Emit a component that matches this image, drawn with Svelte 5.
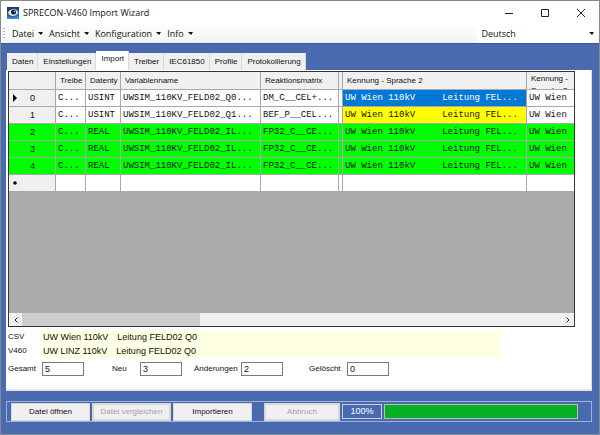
<script lang="ts">
  const menus = ["Datei", "Ansicht", "Konfiguration", "Info"];
  const tabs = ["Daten", "Einstellungen", "Import", "Treiber", "IEC61850", "Profile", "Protokollierung"];
  const kennung = "UW Wien 110kV     Leitung FEL...";

  const rows = [
    { type: "USINT", name: "UWSIM_110KV_FELD02_Q0...", matrix: "DM_C__CEL+...", state: "selected" },
    { type: "USINT", name: "UWSIM_110KV_FELD02_Q1...", matrix: "BEF_P__CEL...", state: "changed" },
    { type: "REAL", name: "UWSIM_110KV_FELD02_IL...", matrix: "FP32_C__CE...", state: "added" },
    { type: "REAL", name: "UWSIM_110KV_FELD02_IL...", matrix: "FP32_C__CE...", state: "added" },
    { type: "REAL", name: "UWSIM_110KV_FELD02_IL...", matrix: "FP32_C__CE...", state: "added" },
  ];

  const compare = [
    { source: "CSV", station: "UW Wien 110kV", line: "Leitung FELD02 Q0" },
    { source: "V460", station: "UW LINZ 110kV", line: "Leitung FELD02 Q0" },
  ];

  const counts = [
    { id: "total", label: "Gesamt", value: "5" },
    { id: "new", label: "Neu", value: "3" },
    { id: "changes", label: "Änderungen", value: "2" },
    { id: "deleted", label: "Gelöscht", value: "0" },
  ];

  let activeTab = $state("Import");
  let language = $state("Deutsch");
  let progress = $state(100);
</script>

<div class="window">
  <header class="titlebar">
    <svg class="logo" viewBox="0 0 12 12" aria-hidden="true">
      <rect width="12" height="12" fill="#2a5fa8" />
      <path d="M0 0h12v3L6 2 0 5z" fill="#1b3d78" />
      <path d="M1 6c1-3 3-4 5.500-4S11 4 11 6c-1 2-3 3-5 3S2 8 1 6z" fill="#dfe7ee" />
      <circle cx="6.500" cy="5" r="2.500" fill="#10182a" />
      <circle cx="7.500" cy="4.500" r=".8" fill="#c9d6e2" />
      <path d="M0 9c3 2 8 2 12-1v4H0z" fill="#3f86cf" />
    </svg>
    <h1>SPRECON-V460 Import Wizard</h1>
    <div class="window-buttons">
      <button aria-label="Minimieren"><svg viewBox="0 0 10 10"><path d="M1 5.500h8" /></svg></button>
      <button aria-label="Maximieren"><svg viewBox="0 0 10 10"><path d="M1.500 1.500h7v7h-7z" /></svg></button>
      <button aria-label="Schließen"><svg viewBox="0 0 10 10"><path d="M1 1l8 8M9 1l-8 8" /></svg></button>
    </div>
  </header>

  <nav class="menubar">
    <span class="grip"></span>
    {#each menus as menu (menu)}
      <button class="menu">{menu}<span class="caret"></span></button>
    {/each}
    <div class="language">
      <select aria-label="Sprache" bind:value={language}>
        <option>Deutsch</option>
        <option>English</option>
      </select>
      <span class="caret"></span>
    </div>
  </nav>

  <main>
    <div class="tabs" role="tablist">
      {#each tabs as tab (tab)}
        <button
          class="tab"
          class:active={tab === activeTab}
          role="tab"
          aria-selected={tab === activeTab}
          onclick={() => (activeTab = tab)}
        >{tab}</button>
      {/each}
    </div>

    <section class="page">
      <div class="grid">
        <div class="grid-view">
          <table>
            <colgroup>
              <col class="c-head" /><col class="c-driver" /><col class="c-type" /><col class="c-name" />
              <col class="c-matrix" /><col class="c-thin" /><col class="c-lang" /><col />
            </colgroup>
            <thead>
              <tr>
                <th></th>
                <th>Treibe</th>
                <th>Datenty</th>
                <th>Variablenname</th>
                <th>Reaktionsmatrix</th>
                <th></th>
                <th>Kennung - Sprache 2</th>
                <th class="wrap"><div>Kennung - Sprache 3</div></th>
              </tr>
            </thead>
            <tbody>
              {#each rows as row, i}
                <tr class={row.state}>
                  <th scope="row"><div class="row-head">
                    <svg viewBox="0 0 4 8">{#if i === 0}<path d="M0 0l4 4-4 4z" />{/if}</svg>
                    <span>{i}</span>
                  </div></th>
                  <td>C...</td>
                  <td>{row.type}</td>
                  <td>{row.name}</td>
                  <td>{row.matrix}</td>
                  <td></td>
                  <td class="kennung">{kennung}</td>
                  <td>UW Wien</td>
                </tr>
              {/each}
              <tr>
                <th scope="row"><div class="row-head">
                  <svg viewBox="0 0 4 8"><circle cx="2" cy="4" r="1.800" /></svg>
                </div></th>
                <td></td><td></td><td></td><td></td><td></td><td></td><td></td>
              </tr>
            </tbody>
          </table>
        </div>
        <div class="scrollbar">
          <button aria-label="Nach links"><svg viewBox="0 0 6 6"><path d="M4.500 .5L2 3l2.500 2.500" /></svg></button>
          <div class="track"><div class="thumb"></div></div>
          <button aria-label="Nach rechts"><svg viewBox="0 0 6 6"><path d="M1.500 .5L4 3L1.500 5.500" /></svg></button>
        </div>
      </div>

      <dl class="compare">
        {#each compare as item (item.source)}
          <div>
            <dt>{item.source}</dt>
            <dd><span>{item.station}</span><span>{item.line}</span></dd>
          </div>
        {/each}
      </dl>

      <div class="counts">
        {#each counts as count (count.id)}
          <label for={count.id} class={count.id}>{count.label}</label>
          <input id={count.id} value={count.value} />
        {/each}
      </div>
    </section>

    <footer>
      <button>Datei öffnen</button>
      <button disabled>Datei vergleichen</button>
      <button>Importieren</button>
      <button class="cancel" disabled>Abbruch</button>
      <output>{progress}%</output>
      <div class="progress" role="progressbar" aria-label="Fortschritt" aria-valuenow={progress}>
        <div style="width: {progress}%"></div>
      </div>
    </footer>
  </main>
</div>

<style>
  :global(body) {
    margin: 0;
  }
  .window {
    --ui: "Open Sans", "Noto Sans", sans-serif;
    --form: "Liberation Sans", Arial, sans-serif;
    --blue: #496aae;
    --blue-dark: #3259a5;
    display: flex;
    flex-direction: column;
    box-sizing: border-box;
    min-height: 100vh;
    border: 1px solid #85888f;
    background: var(--blue);
    color: #111;
    font: 8px/12px var(--form);
  }
  button, input, select {
    margin: 0;
    padding: 0;
    border: none;
    border-radius: 0;
    background: none;
    color: inherit;
    font: inherit;
  }
  .titlebar {
    display: flex;
    align-items: center;
    height: 23px;
    padding-left: 6px;
    background: #fff;
    font-family: var(--ui);
  }
  .logo {
    width: 12px;
    height: 12px;
    margin-right: 4px;
  }
  h1 {
    flex: 1;
    margin: 0;
    font-size: 9px;
    font-weight: 400;
  }
  .window-buttons {
    display: flex;
  }
  .window-buttons button {
    display: grid;
    place-items: center;
    width: 36px;
    height: 22px;
  }
  .window-buttons svg {
    width: 10px;
    height: 10px;
    fill: none;
    stroke: #222;
  }
  .menubar {
    display: flex;
    align-items: center;
    height: 19px;
    padding: 0 3px 0 2px;
    background: linear-gradient(#fff, #f2f3f4);
    font-family: var(--ui);
    font-size: 9px;
  }
  .grip {
    width: 2px;
    height: 12px;
    margin-right: 7px;
    background: repeating-linear-gradient(#b5b5b5 0 1px, transparent 1px 3px);
  }
  .menu {
    display: flex;
    align-items: center;
    gap: 4px;
    margin-right: 6px;
  }
  .caret {
    border: 3px solid transparent;
    border-width: 3px 2px 0 3px;
    border-top-color: #111;
  }
  .language {
    display: flex;
    align-items: center;
    width: 20%;
    height: 18px;
    margin-left: auto;
    background: #fff;
  }
  .language select {
    flex: 1;
    padding-left: 4px;
    appearance: none;
  }
  .language .caret {
    margin-right: 2px;
  }
  main {
    display: flex;
    flex: 1;
    flex-direction: column;
    padding: 7px 7px 12px 5px;
    border-top: 1px solid var(--blue-dark);
  }
  .tabs {
    display: flex;
    align-items: flex-end;
    padding-left: 1px;
  }
  .tab {
    height: 17px;
    padding: 0 4px 0 5px;
    border-right: 1px solid #d9d9d9;
    background: #f0f0f0;
  }
  .tab.active {
    height: 19px;
    padding-bottom: 3px;
    background: #fff;
  }
  .page {
    display: flex;
    flex: 1;
    flex-direction: column;
    padding: 1px 16px 13px 2px;
    border-right: 1px solid #dcdcdc;
    border-bottom: 2px solid #e4e4e4;
    background: #fff;
  }
  .grid {
    display: flex;
    flex: 1;
    flex-direction: column;
    border: 1px solid #333;
    background: #ababab;
  }
  .grid-view {
    flex: 1;
    overflow: hidden;
  }
  table {
    width: 100%;
    table-layout: fixed;
    border-spacing: 0;
  }
  .c-head { width: 47px; }
  .c-driver { width: 30px; }
  .c-type { width: 35px; }
  .c-name { width: 140px; }
  .c-matrix { width: 78px; }
  .c-thin { width: 4px; }
  .c-lang { width: 184px; }
  th, td {
    box-sizing: border-box;
    height: 17px;
    padding: 0 0 0 2px;
    border-right: 1px solid #a8a8a8;
    border-bottom: 1px solid #a8a8a8;
    background: #fff;
    font-weight: 400;
    line-height: 12px;
    text-align: left;
    white-space: pre;
    overflow: hidden;
  }
  td {
    font-family: "Liberation Mono", "Courier New", monospace;
    font-size: 9px;
  }
  th {
    background: #f0f0f0;
  }
  thead th {
    height: 18px;
    padding-left: 4px;
  }
  th:last-child, td:last-child {
    border-right: none;
  }
  .wrap div {
    height: 16px;
    white-space: normal;
    overflow: hidden;
  }
  .row-head {
    display: flex;
    align-items: center;
    gap: 13px;
    padding-left: 2px;
    font-size: 9px;
  }
  .row-head svg {
    width: 4px;
    height: 8px;
  }
  .added th, .added td {
    background: #0f0;
  }
  .selected .kennung {
    background: #0078d7;
    color: #fff;
  }
  .changed .kennung {
    background: #ff0;
  }
  .scrollbar {
    display: flex;
    height: 13px;
    background: #f0f0f0;
  }
  .scrollbar button {
    display: grid;
    place-items: center;
    width: 13px;
  }
  .scrollbar svg {
    width: 6px;
    height: 6px;
    fill: none;
    stroke: #222;
  }
  .track {
    display: flex;
    flex: 1;
  }
  .thumb {
    width: 33%;
    background: #cdcdcd;
  }
  .compare {
    margin: 4px 0 0;
  }
  .compare div {
    display: flex;
    margin-bottom: 1px;
  }
  .compare dt {
    width: 35px;
  }
  .compare dd {
    display: flex;
    flex: 1;
    gap: 9px;
    height: 13px;
    margin: 0 75px 0 0;
    background: #ffffe1;
    font-size: 9px;
  }
  .counts {
    display: flex;
    align-items: center;
    margin-top: 3px;
  }
  .counts input {
    box-sizing: border-box;
    width: 42px;
    height: 14px;
    padding-left: 2px;
    border: 1px solid #7a7a7a;
    background: #fff;
    font-size: 9px;
  }
  .counts label {
    width: 34px;
  }
  .counts .new {
    width: 28px;
    margin-left: 28px;
  }
  .counts .changes {
    width: 47px;
    margin-left: 12px;
  }
  .counts .deleted {
    width: 38px;
    margin-left: 26px;
  }
  footer {
    display: flex;
    align-items: center;
    height: 19px;
    margin-top: 10px;
    padding: 0 13px 0 4px;
    border: 1px solid #9fb2da;
  }
  footer button {
    box-sizing: border-box;
    width: 79px;
    height: 18px;
    margin-right: 2px;
    border: 1px solid #d8d8d8;
    background: #f0f0f0;
  }
  footer button:disabled {
    border: 2px solid #d8d8d8;
    color: #a0a0a0;
  }
  footer .cancel {
    width: 76px;
    margin-left: 10px;
  }
  footer output {
    box-sizing: border-box;
    width: 40px;
    height: 15px;
    margin-right: 2px;
    border: 1px solid #c5d0e8;
    color: #fff;
    font-size: 9px;
    text-align: center;
  }
  .progress {
    flex: 1;
    height: 13px;
    border: 1px solid #bcbcbc;
    background: #e6e6e6;
  }
  .progress div {
    height: 100%;
    background: #06b025;
  }
</style>
